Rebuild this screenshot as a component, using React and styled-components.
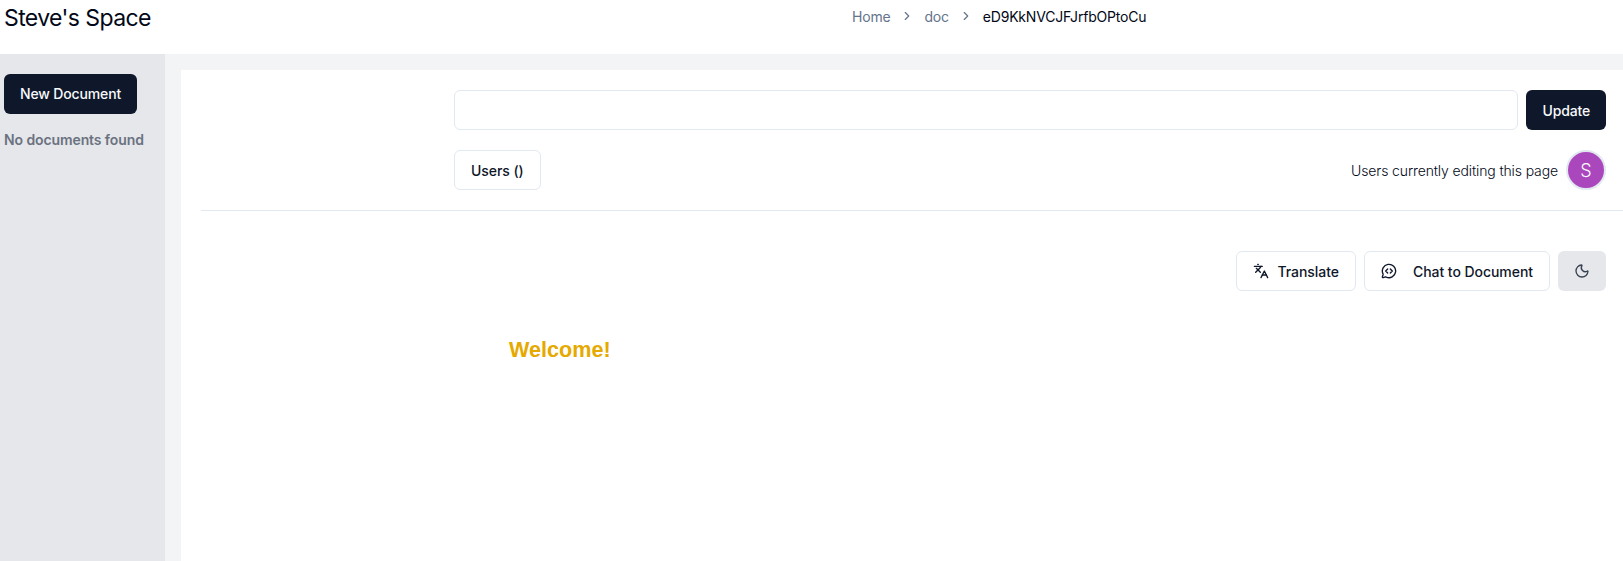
import React from 'react'
import styled, { createGlobalStyle } from 'styled-components'
import { Languages, MessageCircleCode, Moon, ChevronRight } from 'lucide-react'

const GlobalStyle = createGlobalStyle`
  html, body {
    margin: 0;
    height: 100%;
    overflow: hidden;
    background: #fff;
    font-family: Inter, "Liberation Sans", sans-serif;
    color: #0f172a;
  }
  * { box-sizing: border-box; }
`
const Page = styled.div`
  display: flex;
  flex-direction: column;
  width: 1623px;
  height: 561px;
`
const Header = styled.header`
  display: flex;
  height: 54px;
  flex-shrink: 0;
  padding-left: 4px;
`
const Title = styled.h1`
  width: 848px;
  margin: 2px 0 0;
  font-size: 23px;
  line-height: 32px;
  font-weight: 400;
  letter-spacing: -0.6px;
  color: #020817;
`
const Breadcrumb = styled.nav`
  display: flex;
  align-items: center;
  gap: 10px;
  height: 20px;
  margin-top: 6px;
  font-size: 14px;
  letter-spacing: -0.2px;
  color: #64748b;
`
const Crumb = styled.span`
  color: ${p => (p.$current ? '#020817' : '#64748b')};
`
const Body = styled.div`
  display: flex;
  flex: 1;
  min-height: 0;
`
const Sidebar = styled.aside`
  width: 165px;
  flex-shrink: 0;
  padding: 20px 4px;
  background: #e5e7eb;
`
const PrimaryButton = styled.button`
  height: 40px;
  padding: 0 16px ${p => (p.$raised ? 1 : 0)}px;
  border: none;
  border-radius: 6px;
  background: #0f172a;
  color: #f8fafc;
  font: 500 14px Inter, sans-serif;
  letter-spacing: -0.15px;
`
const Empty = styled.p`
  margin: 16px 0 0;
  font-size: 14px;
  line-height: 20px;
  font-weight: 600;
  letter-spacing: -0.1px;
  color: #6b7280;
`
const Main = styled.main`
  flex: 1;
  padding: 16px 0 0 16px;
  background: #f3f4f6;
`
const Panel = styled.section`
  height: 100%;
  padding: 20px 17px 0 20px;
  background: #fff;
`
const DocForm = styled.div`
  display: flex;
  flex-direction: column;
  gap: 20px;
  margin-left: 253px;
`
const Row = styled.div`
  display: flex;
  align-items: center;
  justify-content: ${p => (p.$between ? 'space-between' : 'flex-start')};
  gap: 8px;
`
const TitleInput = styled.input`
  flex: 1;
  height: 40px;
  padding: 0 12px;
  border: 1px solid #e2e8f0;
  border-radius: 6px;
  background: #fff;
`
const OutlineButton = styled.button`
  display: inline-flex;
  align-items: center;
  justify-content: center;
  height: 40px;
  padding: 0 16px;
  gap: ${p => p.$gap || 0}px;
  border: 1px solid #e2e8f0;
  border-radius: 6px;
  background: #fff;
  color: #0f172a;
  font: 500 14px Inter, sans-serif;
  letter-spacing: -0.05px;
`
const Editing = styled.div`
  display: flex;
  align-items: center;
  gap: 8px;
  font-size: 14px;
  font-weight: 300;
  letter-spacing: -0.12px;
  color: #020817;
`
const Avatar = styled.div`
  display: flex;
  align-items: center;
  justify-content: center;
  width: 40px;
  height: 40px;
  border: 2px solid #e2e8f0;
  border-radius: 50%;
  background: #ab47bc;
  color: #f8fafc;
  font-size: 18px;
`
const Divider = styled.hr`
  height: 1px;
  margin: 20px -17px 0 0;
  border: none;
  background: #e2e8f0;
`
const Toolbar = styled.div`
  display: flex;
  justify-content: flex-end;
  gap: 8px;
  margin-top: 40px;
`
const ThemeButton = styled.button`
  display: flex;
  align-items: center;
  justify-content: center;
  width: 48px;
  height: 40px;
  border: none;
  border-radius: 6px;
  background: #e5e7eb;
  color: #374151;
`
const Welcome = styled.h2`
  margin: 45px 0 0 308px;
  font: 700 21.6px/28px "Liberation Sans", Arial, sans-serif;
  color: #e5a900;
`

export default function App() {
  return (
    <Page>
      <GlobalStyle />
      <Header>
        <Title>Steve's Space</Title>
        <Breadcrumb>
          <Crumb>Home</Crumb>
          <ChevronRight size={14} />
          <Crumb>doc</Crumb>
          <ChevronRight size={14} />
          <Crumb $current>eD9KkNVCJFJrfbOPtoCu</Crumb>
        </Breadcrumb>
      </Header>
      <Body>
        <Sidebar>
          <PrimaryButton $raised>New Document</PrimaryButton>
          <Empty>No documents found</Empty>
        </Sidebar>
        <Main>
          <Panel>
            <DocForm>
              <Row>
                <TitleInput />
                <PrimaryButton>Update</PrimaryButton>
              </Row>
              <Row $between>
                <OutlineButton>Users ()</OutlineButton>
                <Editing>
                  Users currently editing this page
                  <Avatar>S</Avatar>
                </Editing>
              </Row>
            </DocForm>
            <Divider />
            <Toolbar>
              <OutlineButton $gap={8}><Languages size={16} />Translate</OutlineButton>
              <OutlineButton $gap={16}><MessageCircleCode size={16} />Chat to Document</OutlineButton>
              <ThemeButton><Moon size={16} /></ThemeButton>
            </Toolbar>
            <Welcome>Welcome!</Welcome>
          </Panel>
        </Main>
      </Body>
    </Page>
  )
}
